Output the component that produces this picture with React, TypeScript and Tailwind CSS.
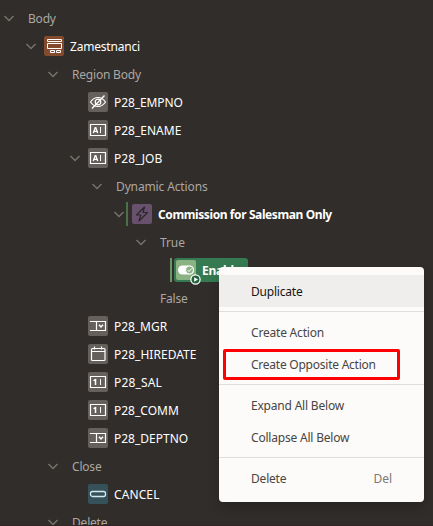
import type { ReactNode } from "react";

type Kind = "region" | "hidden" | "text" | "select" | "date" | "number" | "bolt" | "toggle" | "button";

const TILE: Record<Kind, string> = {
  region: "bg-[#834a2d]",
  hidden: "bg-[#65605c]",
  text: "bg-[#65605c]",
  select: "bg-[#65605c]",
  date: "bg-[#65605c]",
  number: "bg-[#65605c]",
  bolt: "bg-[#68516d]",
  toggle: "bg-[#8ab283]",
  button: "bg-[#35525b]",
};

const GLYPH: Record<Kind, ReactNode> = {
  region: (
    <>
      <path d="M3.5 3.5h14v2h-14zM3.5 7.5h14v5h-14z" />
      <path d="M6.5 14.5h4v2h-4zM12.5 14.5h4v2h-4z" />
    </>
  ),
  hidden: (
    <>
      <path d="M2.5 10C4.500 7 7 5.500 10 5.500s5.500 1.500 7.500 4.500c-2 3-4.500 4.500-7.500 4.500s-5.500-1.500-7.500-4.500z" strokeWidth="1.200" />
      <circle cx="10" cy="10" r="2.800" strokeWidth="1.200" />
      <path d="M16.500 3.500L4 16.500" strokeWidth="1.300" />
    </>
  ),
  text: (
    <>
      <path d="M2.500 4.500h15v11h-15z" strokeWidth="1.200" />
      <path d="M12.500 7v6" />
      <path d="M5.300 13l1.900-5.300h.6L9.700 13M6 11.300h3" strokeWidth="1.350" />
    </>
  ),
  select: (
    <>
      <path d="M2 5.500h15.500v9H2M8.500 5.500v9" strokeWidth="1.200" />
      <path d="M11 8.800l2 2.200 2-2.200" strokeWidth="1.500" />
    </>
  ),
  date: (
    <>
      <rect x="3.500" y="4.500" width="13.500" height="12" rx="1" strokeWidth="1.200" />
      <path d="M3.500 7.500h13.500M6.500 2.500v3M13.500 2.500v3" strokeWidth="1.200" />
    </>
  ),
  number: (
    <>
      <path d="M2.500 4.500h15v11h-15z" strokeWidth="1.200" />
      <path d="M12.500 7v6" />
      <path d="M5.500 8.700l2-1V13" strokeWidth="1.500" />
    </>
  ),
  bolt: <path d="M12.500 3L4.500 11h4.300L7 17l8.500-8.500h-4.500z" stroke="#2c2529" strokeWidth="1.200" strokeLinejoin="round" />,
  toggle: (
    <>
      <rect x="2" y="5.500" width="16" height="9" rx="4.500" fill="#fff" stroke="none" />
      <circle cx="13.500" cy="10" r="4" fill="#8ab283" stroke="#fff" />
      <path d="M11.500 10l1.500 1.600 2.600-3.200" />
    </>
  ),
  button: <rect x="2.500" y="7.500" width="15" height="5" rx="2" stroke="#d5e8ed" strokeWidth="1.300" />,
};

function Chevron() {
  return (
    <svg className="h-[18px] w-[18px] shrink-0" viewBox="0 0 18 18" fill="none" stroke="#77726e" strokeWidth="1.500">
      <path d="M4.500 7l4.500 4.500L13.500 7" />
    </svg>
  );
}

function Tile({ kind }: { kind: Kind }) {
  return (
    <span className={`relative h-5 w-5 shrink-0 rounded-[2px] ${TILE[kind]}`}>
      <svg className="h-5 w-5" viewBox="0 0 20 20" fill="none" stroke="#fff">
        {GLYPH[kind]}
      </svg>
      {kind === "toggle" && (
        <svg className="absolute left-[14px] top-[14px] h-[11px] w-[11px]" viewBox="0 0 10 10">
          <circle cx="5" cy="5" r="4.200" fill="#24643f" stroke="#fff" strokeWidth="1.100" />
          <path d="M3.800 2.900L7.300 5 3.800 7.100z" fill="#fff" />
        </svg>
      )}
    </span>
  );
}

interface Node {
  label: string;
  pad: string;
  open?: boolean;
  kind?: Kind;
  track: string;
}

const L0 = "pl-0";
const L1 = "pl-[22px]";
const L2 = "pl-[44px]";
const L3 = "pl-[66px]";
const L4 = "pl-[88px]";
const L5 = "pl-[110px]";
const L6 = "pl-[132px]";
const L7 = "pl-[154px]";

const NODES: Node[] = [
  { label: "Body", pad: L0, open: true, track: "tracking-[-0.2px]" },
  { label: "Zamestnanci", pad: L1, open: true, kind: "region", track: "tracking-[-0.2px]" },
  { label: "Region Body", pad: L2, open: true, track: "tracking-[-0.2px]" },
  { label: "P28_EMPNO", pad: L3, kind: "hidden", track: "tracking-[-0.1px]" },
  { label: "P28_ENAME", pad: L3, kind: "text", track: "tracking-[0px]" },
  { label: "P28_JOB", pad: L3, open: true, kind: "text", track: "tracking-[0.05px]" },
  { label: "Dynamic Actions", pad: L4, open: true, track: "tracking-[-0.13px]" },
  { label: "Commission for Salesman Only", pad: L5, open: true, kind: "bolt", track: "tracking-[-0.4px]" },
  { label: "True", pad: L6, open: true, track: "tracking-[-0.1px]" },
  { label: "Enable", pad: L7, kind: "toggle", track: "tracking-[-0.2px]" },
  { label: "False", pad: L6, track: "tracking-[-0.2px]" },
  { label: "P28_MGR", pad: L3, kind: "select", track: "tracking-[-0.05px]" },
  { label: "P28_HIREDATE", pad: L3, kind: "date", track: "tracking-[0.03px]" },
  { label: "P28_SAL", pad: L3, kind: "number", track: "tracking-[0.15px]" },
  { label: "P28_COMM", pad: L3, kind: "number", track: "tracking-[0px]" },
  { label: "P28_DEPTNO", pad: L3, kind: "select", track: "tracking-[0px]" },
  { label: "Close", pad: L2, open: true, track: "tracking-[-0.2px]" },
  { label: "CANCEL", pad: L3, kind: "button", track: "tracking-[0.1px]" },
  { label: "Delete", pad: L2, open: true, track: "tracking-[-0.2px]" },
];

function Row({ node }: { node: Node }) {
  const selected = node.kind === "toggle";
  const bold = selected || node.kind === "bolt";
  const tone = node.kind ? "text-white" : "text-[#aba7a3]";
  const bar = selected ? "bg-[#6d9466]" : node.kind === "bolt" ? "bg-[#4c7049]" : "";
  return (
    <div className={`flex h-7 shrink-0 items-center ${node.pad}`}>
      <span className="flex w-[18px] shrink-0">{node.open && <Chevron />}</span>
      {!node.kind && <span className={`ml-[10px] pt-[2px] ${tone} ${node.track}`}>{node.label}</span>}
      {node.kind && (
        <>
          <span className={`-ml-[2px] mr-[2px] h-6 w-[2px] shrink-0 ${bar}`} />
          <span className={`flex h-6 items-center rounded-[3px] pl-[2px] ${selected ? "w-[74px] bg-[#357a50]" : ""}`}>
            <Tile kind={node.kind} />
            <span className={`ml-[6px] pt-[2px] ${tone} ${node.track} ${bold ? "font-bold" : ""}`}>{node.label}</span>
          </span>
        </>
      )}
    </div>
  );
}

function Item({ label, track, hint, active }: { label: string; track: string; hint?: string; active?: boolean }) {
  return (
    <div className={`flex h-8 items-center justify-between pl-8 pr-8 pt-[2px] ${active ? "bg-[#efeeed] text-[#161513]" : "text-[#484542]"}`}>
      <span className={track}>{label}</span>
      {hint && <span className="text-[#7b7875]">{hint}</span>}
    </div>
  );
}

function Rule() {
  return <div className="mb-1 mt-1 h-px bg-[#dfdedc]" />;
}

export default function App() {
  return (
    <div className="relative h-[526px] w-[433px] overflow-hidden bg-[#312d2a] font-['Noto_Sans',sans-serif] text-[12px] leading-[16px] whitespace-nowrap">
      <div className="flex flex-col pt-1">
        {NODES.map((n) => (
          <Row key={n.label} node={n} />
        ))}
      </div>
      <div className="absolute left-[219px] top-[267px] h-[235px] w-[205px] rounded-[4px] bg-[#fcfbfa] py-2 shadow-[0_6px_12px_rgba(0,0,0,0.2)]">
        <Item label="Duplicate" active track="tracking-[-0.2px]" />
        <Rule />
        <Item label="Create Action" track="tracking-[-0.2px]" />
        <Item label="Create Opposite Action" track="tracking-[-0.24px]" />
        <Rule />
        <Item label="Expand All Below" track="tracking-[-0.2px]" />
        <Item label="Collapse All Below" track="tracking-[-0.2px]" />
        <Rule />
        <Item label="Delete" hint="Del" track="tracking-[-0.2px]" />
      </div>
      <div className="absolute left-[223px] top-[349px] h-[31px] w-[177px] rounded-[2px] border-[3px] border-[#ff0000]" />
      <div className="absolute bottom-0 left-0 h-px w-full bg-[#352426]" />
    </div>
  );
}
